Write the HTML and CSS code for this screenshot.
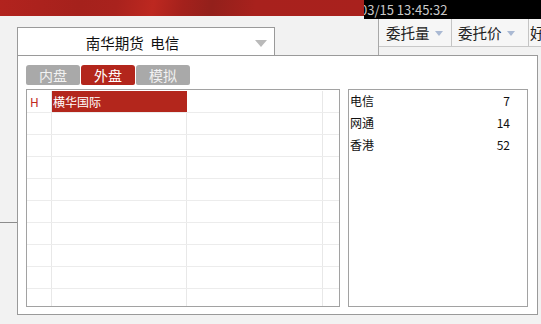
FILE: index.html
```html
<!DOCTYPE html>
<html lang="zh-CN">
<head>
<meta charset="utf-8">
<title>线路选择</title>
<link rel="stylesheet" href="styles.css">
</head>
<body>
<div class="app">
  <div class="topbar">
    <div class="brand"></div>
    <div class="clock"><span class="clock-text">03/15 13:45:32</span></div>
  </div>
  <div class="workspace">
    <div class="leftpane"></div>
    <div class="orders">
      <div class="orders-head">
        <div class="hcol hc1">委托量<span class="sort"></span></div>
        <div class="hcol hc2">委托价<span class="sort"></span></div>
        <div class="hcol hc3">好</div>
      </div>
    </div>
  </div>
</div>

<div class="dialog">
  <div class="combo">
    <div class="combo-label">南华期货&nbsp;&nbsp;电信</div>
    <span class="combo-arrow"></span>
  </div>
  <div class="panel">
    <div class="tabs">
      <div class="tab">内盘</div>
      <div class="tab active">外盘</div>
      <div class="tab">模拟</div>
    </div>
    <div class="panel-body">
      <div class="grid">
        <div class="row"><div class="cell k1 mark">H</div><div class="cell k2 sel">横华国际</div><div class="cell k3"></div><div class="cell k4"></div></div>
        <div class="row"><div class="cell k1"></div><div class="cell k2"></div><div class="cell k3"></div><div class="cell k4"></div></div>
        <div class="row"><div class="cell k1"></div><div class="cell k2"></div><div class="cell k3"></div><div class="cell k4"></div></div>
        <div class="row"><div class="cell k1"></div><div class="cell k2"></div><div class="cell k3"></div><div class="cell k4"></div></div>
        <div class="row"><div class="cell k1"></div><div class="cell k2"></div><div class="cell k3"></div><div class="cell k4"></div></div>
        <div class="row"><div class="cell k1"></div><div class="cell k2"></div><div class="cell k3"></div><div class="cell k4"></div></div>
        <div class="row"><div class="cell k1"></div><div class="cell k2"></div><div class="cell k3"></div><div class="cell k4"></div></div>
        <div class="row"><div class="cell k1"></div><div class="cell k2"></div><div class="cell k3"></div><div class="cell k4"></div></div>
        <div class="row"><div class="cell k1"></div><div class="cell k2"></div><div class="cell k3"></div><div class="cell k4"></div></div>
        <div class="row"><div class="cell k1"></div><div class="cell k2"></div><div class="cell k3"></div><div class="cell k4"></div></div>
      </div>
      <div class="lines">
        <div class="line"><span>电信</span><span>7</span></div>
        <div class="line"><span>网通</span><span>14</span></div>
        <div class="line"><span>香港</span><span>52</span></div>
      </div>
    </div>
  </div>
</div>
</body>
</html>
```

FILE: styles.css
```css
* { box-sizing: border-box; }

html, body {
  margin: 0;
  padding: 0;
}

body {
  width: 541px;
  height: 324px;
  overflow: hidden;
  background: #f2f2f2;
  font-family: "Noto Sans CJK SC", "Noto Sans", "Liberation Sans", sans-serif;
  color: #111;
  position: relative;
}

/* ---------- background application ---------- */
.topbar {
  display: flex;
  align-items: flex-start;
  height: 19px;
}

.brand {
  width: 364px;
  height: 16px;
  background: linear-gradient(100deg, #b2231e 0%, #a5211c 22%, #a9221d 32%, #bd2820 42%, #a4211c 50%, #93201b 58%, #a8211d 70%, #a9211d 100%);
}

.clock {
  flex: 1;
  height: 19px;
  background: #000;
  overflow: hidden;
  white-space: nowrap;
}

.clock-text {
  display: block;
  margin-left: -4px;
  font-size: 13px;
  line-height: 19px;
  color: #c9c9c9;
}

.workspace {
  display: flex;
  align-items: flex-start;
}

.leftpane {
  width: 378px;
  flex-shrink: 0;
  height: 204px;
  border-bottom: 1px solid #8c8c8c;
}

.orders {
  flex: 1;
  min-width: 0;
  height: 37px;
  border-left: 1px solid #a8a8a8;
  overflow: hidden;
}

.orders-head {
  display: flex;
  height: 28px;
  border-bottom: 1px solid #c8c8c8;
  background: #f6f6f6;
  white-space: nowrap;
  overflow: hidden;
}

.hcol {
  display: flex;
  align-items: center;
  flex-shrink: 0;
  font-size: 14.5px;
  color: #222;
  border-right: 1px solid #c4c4c4;
}

.hc1 { width: 73px; padding-left: 7px; }
.hc2 { width: 77px; padding-left: 6px; }
.hc3 { width: 30px; padding-left: 1px; border-right: none; }

.sort {
  width: 0;
  height: 0;
  margin-left: 5px;
  margin-top: 2px;
  border-left: 4px solid transparent;
  border-right: 4px solid transparent;
  border-top: 5px solid #aab9d3;
}

/* ---------- dialog ---------- */
.dialog {
  position: absolute;
  left: 17px;
  top: 27px;
  width: 521px;
}

.combo {
  display: flex;
  align-items: center;
  width: 258px;
  height: 28px;
  background: #fff;
  border: 1px solid #9a9a9a;
  border-bottom: none;
}

.combo-label {
  flex: 1;
  text-align: center;
  font-size: 14.5px;
  color: #111;
  white-space: nowrap;
  padding-top: 1px;
}

.combo-arrow {
  width: 0;
  height: 0;
  margin-left: 8px;
  margin-right: 7px;
  margin-top: 3px;
  border-left: 6.5px solid transparent;
  border-right: 6.5px solid transparent;
  border-top: 7px solid #bababa;
}

.panel {
  height: 260px;
  background: #fff;
  border: 1px solid #9a9a9a;
  padding: 9px 9px 7px 8px;
}

.tabs {
  display: flex;
  gap: 1px;
  height: 20px;
  margin-bottom: 4px;
}

.tab {
  width: 54px;
  height: 20px;
  border-radius: 3px 3px 2px 2px;
  background: #a9a9a9;
  color: #f2f2f2;
  font-size: 14px;
  line-height: 20px;
  text-align: center;
}

.tab.active {
  background: #b3261c;
  color: #fff;
}

.panel-body {
  display: flex;
  gap: 8px;
  height: 218px;
}

.grid {
  width: 314px;
  height: 218px;
  border: 1px solid #a2a2a2;
  padding-top: 1px;
  overflow: hidden;
}

.row {
  display: flex;
  height: 22px;
  border-bottom: 1px solid #ececec;
}

.cell {
  height: 21px;
  border-right: 1px solid #e8e8e8;
  font-size: 12px;
  line-height: 21px;
  white-space: nowrap;
}

.k1 { width: 25px; padding-left: 3px; }
.k2 { width: 135px; padding-left: 1px; }
.k3 { width: 136px; }
.k4 { width: 16px; border-right: none; }

.mark { color: #c0281f; }

.sel {
  background: #b3261c;
  color: #fff;
  border-right-color: #b3261c;
}

.lines {
  width: 180px;
  height: 218px;
  border: 1px solid #a2a2a2;
}

.line {
  display: flex;
  justify-content: space-between;
  height: 22px;
  padding: 0 17px 0 1px;
  font-size: 12px;
  line-height: 22px;
  color: #111;
}
```
